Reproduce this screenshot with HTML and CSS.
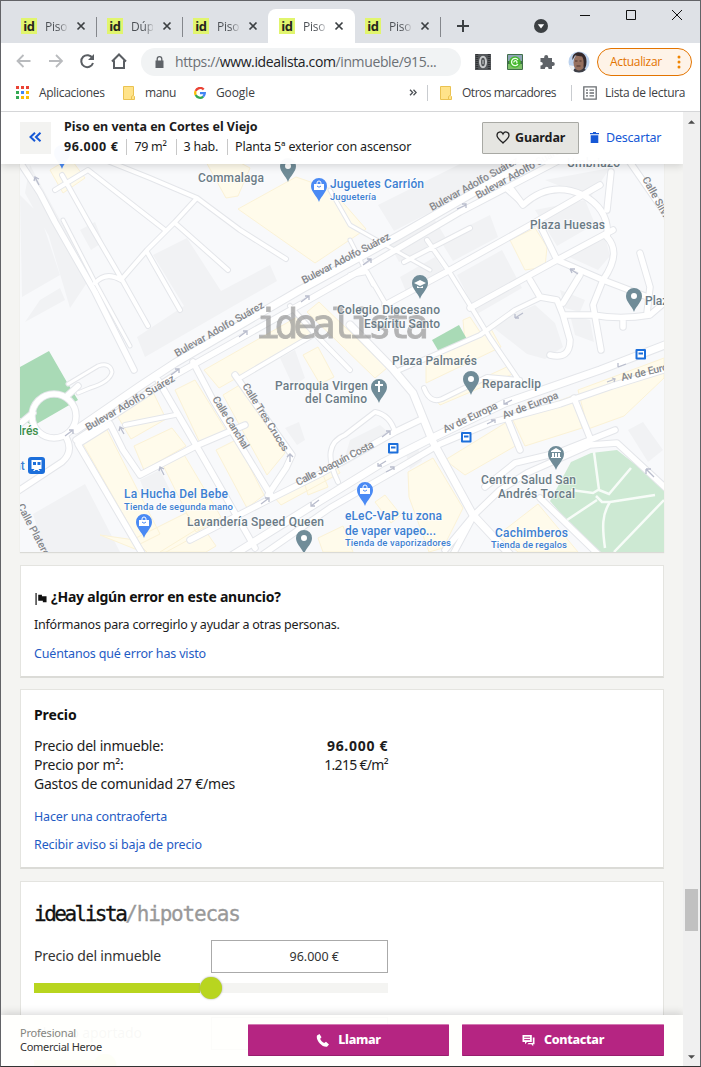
FILE: index.html
```html
<!DOCTYPE html>
<html lang="es">
<head>
<meta charset="utf-8">
<title>Piso en venta en Cortes el Viejo</title>
<link rel="stylesheet" href="styles.css">
</head>
<body>
<div class="window">
  <div class="tabs">
    <div class="tab"><span class="fav">id</span><span class="tab-name">Piso</span><svg class="x" viewBox="0 0 10 10"><path d="M1.5 1.5l7 7m0-7l-7 7"/></svg></div>
    <div class="tab"><span class="fav">id</span><span class="tab-name">Dúp</span><svg class="x" viewBox="0 0 10 10"><path d="M1.5 1.5l7 7m0-7l-7 7"/></svg></div>
    <div class="tab no-sep"><span class="fav">id</span><span class="tab-name">Piso</span><svg class="x" viewBox="0 0 10 10"><path d="M1.5 1.5l7 7m0-7l-7 7"/></svg></div>
    <div class="tab active"><span class="fav">id</span><span class="tab-name">Piso</span><svg class="x" viewBox="0 0 10 10"><path d="M1.5 1.5l7 7m0-7l-7 7"/></svg></div>
    <div class="tab"><span class="fav">id</span><span class="tab-name">Piso</span><svg class="x" viewBox="0 0 10 10"><path d="M1.5 1.5l7 7m0-7l-7 7"/></svg></div>
    <svg class="plus" viewBox="0 0 12 12"><path d="M6 0v12M0 6h12"/></svg>
    <svg class="tab-menu" viewBox="0 0 14 14"><circle cx="7" cy="7" r="7"/><path d="M3.8 5.3h6.4L7 9.6z"/></svg>
    <svg class="win-buttons" viewBox="0 0 104 12"><path d="M0 6.5h10M46.500 1.500h9v9h-9zM92 1l10 10m0-10L92 11"/></svg>
  </div>

  <div class="toolbar">
    <svg class="nav" viewBox="0 0 112 20">
      <g class="nav-off"><path d="M14.500 10H2M7.500 4L1.500 10l6 6M33 10h12.500M40 4l6 6-6 6"/></g>
      <g class="nav-on"><path d="M76.500 7.200A6 6 0 1 0 77 12"/><path class="fill" d="M78 3v6h-6z"/><path d="M96 10.500l7-7 7 7M98 9.500V17h10V9.500"/></g>
    </svg>
    <div class="url">
      <svg class="lock" viewBox="0 0 9 12"><path d="M.5 4.500h8V12h-8z"/><path class="shackle" d="M2.200 5V3a2.300 2.300 0 0 1 4.600 0v2"/></svg>
      <span class="url-text">https://<b>www.idealista.com</b>/inmueble/915...</span>
    </div>
    <svg class="ext" viewBox="0 0 16 16"><rect width="16" height="16" fill="#55585b"/><path d="M2 0v16M14 0v16" stroke="#303234" stroke-width="2.500" stroke-dasharray="1 1"/><ellipse cx="8" cy="8" rx="3" ry="5.200" fill="none" stroke="#c9cbcc" stroke-width="2"/><path d="M8 6v4" stroke="#c9cbcc"/></svg>
    <svg class="ext" viewBox="0 0 16 16"><rect width="16" height="16" rx="1" fill="#3f6f48"/><path d="M1 1h14v6H1z" fill="#8fa4b8"/><path d="M1 10h14v5H1z" fill="#7fc06a"/><circle cx="8" cy="8" r="5.800" fill="#45b72d"/><path d="M11 5.800A3.600 3.600 0 1 0 11 10.200M7 8.500a1.500 1.500 0 1 1 2.500.700" fill="none" stroke="#ecffe8" stroke-width="1.300"/></svg>
    <svg class="ext" viewBox="0 0 16 16"><path fill="#5f6368" d="M1.500 4h3.700V3a2 2 0 0 1 4 0v1H13v4h.8a2 2 0 0 1 0 4H13v3H9.500v-.5a1.800 1.800 0 0 0-3.600 0v.5H1.500v-3.500H2a1.800 1.800 0 0 0 0-3.600h-.5z"/></svg>
    <svg class="avatar" viewBox="0 0 22 22"><clipPath id="face"><circle cx="11" cy="11" r="10.500"/></clipPath><g clip-path="url(#face)"><path fill="#bcd2ee" d="M0 0h22v22H0z"/><path fill="#f2f4f4" d="M0 14l6 1v7H0z"/><path fill="#3f3f45" d="M5 22l1-4 5-2 6 2 3 4z"/><ellipse cx="11" cy="11.500" rx="5.500" ry="8" fill="#96705f"/><path fill="#33282a" d="M4.500 9C3-1 19-2 18.500 11c0 4-1.500 7-3.500 8 1-6 1-11-1-13.500L7 4.500z"/><path d="M7 10h2.500m2 0h2M8.500 15h4" stroke="#49302b"/></g></svg>
    <div class="update"><span>Actualizar</span><svg viewBox="0 0 4 14"><circle cx="2" cy="2" r="1.500"/><circle cx="2" cy="7" r="1.500"/><circle cx="2" cy="12" r="1.500"/></svg></div>
  </div>

  <div class="bookmarks">
    <svg class="apps" viewBox="0 0 13 13"><path fill="#ea4335" d="M0 0h3v3H0zM5 0h3v3H5zM10 0h3v3h-3z"/><path fill="#34a853" d="M0 5h3v3H0zM0 10h3v3H0z"/><path fill="#4285f4" d="M5 5h3v3H5z"/><path fill="#fbbc05" d="M10 5h3v3h-3zM5 10h3v3H5zM10 10h3v3h-3z"/></svg>
    <span class="bm-apps">Aplicaciones</span>
    <svg class="folder" viewBox="0 0 12 14"><path d="M.5.5h10v9l1 1v3H.5z"/><path d="M8.500 13.500v-3l1.500-1"/></svg>
    <span class="bm-manu">manu</span>
    <svg class="google" viewBox="0 0 12 12" fill="none" stroke-width="2.300"><path stroke="#ea4335" d="M9.700 2.500A4.800 4.800 0 0 0 1.700 3.900"/><path stroke="#fbbc05" d="M1.700 3.900a4.800 4.800 0 0 0 0 4.200"/><path stroke="#34a853" d="M1.700 8.100a4.800 4.800 0 0 0 7.500 1.500"/><path stroke="#4285f4" d="M9.200 9.600A4.800 4.800 0 0 0 10.800 6.100H6"/></svg>
    <span class="bm-google">Google</span>
    <svg class="more" viewBox="0 0 8 7"><path d="M1 .7L3.700 3.500 1 6.300M4.500.7l2.700 2.800-2.700 2.800"/></svg>
    <i class="rule"></i>
    <svg class="folder f2" viewBox="0 0 12 14"><path d="M.5.5h10v9l1 1v3H.5z"/><path d="M8.500 13.500v-3l1.500-1"/></svg>
    <span class="bm-other">Otros marcadores</span>
    <i class="rule r2"></i>
    <svg class="list" viewBox="0 0 14 14"><path d="M.8.800h12.400v12.400H.8zM3 4.200h2M6.500 4.200H11M3 7h2M6.500 7H11M3 9.800h2M6.500 9.800H11"/></svg>
    <span class="bm-list">Lista de lectura</span>
  </div>

  <div class="viewport">
    <main class="page">
      <svg class="map" viewBox="20 112 644 440">
        <defs>
          <g id="roads">
            <path class="r7" d="M12 150L40 193L55 222L95 292L134 370"/>
            <path class="r5" d="M63 220L95 282L130 346"/>
            <path class="r6" d="M62 175L90 225L121 278L148 326M95 283Q106 271 121 280L147 250L175 222L197 198M55 190L88 170L165 230M105 160L150 178L197 198L240 230L286 259M175 223L228 270M147 252L180 310"/>
            <path class="r8" d="M76 430L140 386L175 363L300 290L400 235L530 160"/>
            <path class="r7" d="M76 440L175 375L305 302L370 265L460 212L560 160"/>
            <path class="r7" d="M66 437Q74 452 62 462L15 493"/>
            <path class="r7" d="M32 416a22 22 0 1 0 44 0a22 22 0 1 0-44 0M33 413L15 428M67 396L78 386"/>
            <path class="r5" d="M68 384L98 366Q110 362 112 372Q110 382 90 388L78 393"/>
            <path class="r7" d="M146 560L78 444L110 424L123 450L140 475M193 362L213 400L272 497M158 380L200 452L255 548M235 375L292 455L286 468L268 495M140 475L198 445L245 425"/>
            <path class="r6" d="M125 425L175 415M290 306L315 334L240 378M315 334L350 370M338 482Q320 445 345 435L375 412Q390 415 395 432"/>
            <path class="r7" d="M190 540L268 500L320 474L395 432L420 420"/>
            <path class="r8" d="M225 560L315 504L382 463L430 439L505 403L600 370L670 343"/>
            <path class="r7" d="M255 560L330 508L389 474L440 444L490 423L560 404L612 386L670 368"/>
            <path class="r8" d="M350 325L392 368L413 393L432 440L473 515L515 560"/>
            <path class="r6" d="M424 388Q430 404 442 399L487 377L520 380M395 372L480 335L515 310L540 298M350 275L367 272L385 303L390 303M404 262L470 228M427 240L450 273L473 310L490 338L520 382"/>
            <path class="r7" d="M385 305L450 270L527 227L600 185M470 308L557 260L613 230M540 225L557 260L603 280L645 296"/>
            <path class="r7" d="M530 280L540 297L557 300L563 315L570 340Q570 360 550 355M580 275L563 303M563 315L593 315Q620 320 650 315L664 303M603 280L593 305L601 350M607 237Q622 253 603 280M640 253L650 287L647 313M623 318V327"/>
            <path class="r7" d="M512 190L523 205Q550 180 583 195Q610 210 607 237M607 210L611 172M625 155L670 220"/>
            <path class="r7" d="M485 487L515 463L557 453L615 430M474 515L500 490L527 473L590 445L617 443L670 492M474 515L450 560M474 515L445 550M540 498L602 558M508 420L520 450M574 398L590 438"/>
            <path class="r5" d="M350 240L373 285M330 190L350 225L430 270M493 178L523 205"/>
          </g>
          <g id="pin"><path d="M0 10C-2 4-8 0-8-6A8 8 0 0 1 8-6C8 0 2 4 0 10z"/></g>
        </defs>
        <path fill="#f8f9fb" d="M20 112h644v440H20z"/>
        <g class="built">
          <path d="M20 195l20 20 20 60-38 22M60 220l30 58-20 30-25-85zM153 255l34-17 34 53 49-26 7 16-132 76-8-20 47-31zM33 514l52-30 35 68H45zM80 230l15-8 8 20-12 8zM40 300l20-12 5 12-40 22zM30 165l60 110-15 8-50-90z"/>
          <path d="M378 205l120-60 8 28-112 58zM390 245l45-25 12 20-48 22zM400 277l35-20 10 15-38 22zM440 240l50-25 8 22-45 24zM457 275l45-25 20 38-45 26zM545 180l65-12-20 30zM535 210l50-10 10 24-38 22zM565 255l40-19 5 20-12 14zM560 290l25 10-5 12-15-4zM575 335l-5-20 20 5 4 22zM490 325l45-20 20 18 8 24-18 12-18-5z"/>
          <path d="M280 358l15-8 10 28-12 8zM350 440l30-15 14 12-52 30zM628 430l15-8 20 28-15 12zM405 450l12-5 5 16-12 8zM285 428l14-6 6 18-8 5zM140 480l20-10 10 20-22 10z"/>
        </g>
        <g class="yellow">
          <path d="M50 170l20-12 15 20-22 15zM205 160h30l15 8-12 28-12 2zM238 209l58-32 35 12 35 40-51 34zM510 240l25-12 12 19-2 20-20 3zM463 320l7-3 10 15-15 10z"/>
          <path d="M204 370l95-54 17 17-97 55zM307 312l12-10 29 28 39 38-12 10zM303 355l15-8 16 30-14 7zM115 412l38-20 13 27-35 20zM134 446l38-18 14 18-42 24zM82 442l24-14 54 106-20 10zM175 390l20-10 32 52-26 13zM223 395l20-12 42 70-18 22zM216 450l20-10 28 55-17 13zM163 465l20-12 38 64-25 15zM275 498l60-35 5 10-59 32zM305 485l18-10 5 12-20 8zM136 538l50-25 15 20-55 30zM160 552l42-26 14 20-10 6z"/>
          <path d="M426 383l75-36-10-18-65 28zM440 405l75-32-4-8-75 35zM445 460l62-38 10 23-52 30zM512 418l60-22 10 32-57 18zM578 390l86-32v20l-40 38-36 13zM408 472l25-14 30 50-20 40-14 4-20-55zM498 535l40-31 40 48h-60zM375 502l10-7 16 20-10 8zM318 538l25-12 10 26h-30zM100 535l35 5 15 15z"/>
        </g>
        <g class="green">
          <path d="M20 367l29-16 19 33 10 16-45 26-13-8z"/><path d="M432 340l27-15 9 16-29 11z"/><path d="M571 462l20-9 26-3 47 37v65h-70l-44-51z"/>
        </g>
        <use href="#roads" class="casing"/><use href="#roads" class="asphalt"/>
        <path class="paths" d="M594 452l5 38 10 4 22-26M571 490l22 3 5-3M655 495l-45 7-8 0-6-6M610 502c-8 12-8 25-5 46M597 500l-30 20M664 500l-50 52"/>
        <path class="arrows" d="M171 375l8-6m-4 0h4v4M239 337l8-6m-4 0h4v4M301 302l8-6m-4 0h4v4M363 265l8-6m-4 0h4v4M65 436l8-6m-4 0h4v4M261 504l8-6m-4 0h4v4M311 506l8-6m-8 2v4h4M382 437l8-6m-4 0h4v4M378 466l8-5m-8 2v3h4M386 472l8-4m-4-1h4v3M504 404l8-4m-8 0v4h4M487 424l8-4m-4 0h4v3M570 269l8 5m-8-5h5m-5 0l2 4M515 318l8-5m-8 5v-4m0 4h4M646 469l8 8m-8-8h5m-5 0v5M618 367l8-3m-8 3v-4M607 382l8-3m-3-1l3 1-1 3M290 462v-8m-3 3l3-3 3 3M164 475l-4-8m-1 4l1-4 4 2M124 434l-4-7m-1 4l1-4 4 2M457 209l9-4m-4-1h4v4M39 185l-4-8m-1 4l1-4 4 2"/>

        <g class="street">
          <text transform="translate(177 357) rotate(-29.500)" textLength="101">Bulevar Adolfo Suárez</text>
          <text transform="translate(304 284) rotate(-27.500)" textLength="98">Bulevar Adolfo Suárez</text>
          <text transform="translate(432 211) rotate(-29)" textLength="100">Bulevar Adolfo Suárez</text>
          <text transform="translate(478 199) rotate(-29)" textLength="100">Bulevar Adolfo Suárez</text>
          <text transform="translate(88 431) rotate(-30)" textLength="101">Bulevar Adolfo Suárez</text>
          <text transform="translate(212 399) rotate(58)" textLength="60">Calle Canchal</text>
          <text transform="translate(242 386) rotate(58)" textLength="78">Calle Tres Cruces</text>
          <text transform="translate(298 486) rotate(-27)" textLength="86">Calle Joaquín Costa</text>
          <text transform="translate(445 433) rotate(-25)" textLength="59">Av de Europa</text>
          <text transform="translate(504 419) rotate(-21)" textLength="59">Av de Europa</text>
          <text transform="translate(622 381) rotate(-13)" textLength="59">Av de Europa</text>
          <text transform="translate(17 506) rotate(62)" textLength="58">Calle Platero</text>
          <text transform="translate(642 179) rotate(61)" textLength="50">Calle Silvia</text>
        </g>
        <g class="watermark"><text x="256" y="338" textLength="173">idealista</text></g>
        <g class="place">
          <text x="198" y="182" textLength="66">Commalaga</text><text x="530" y="229" textLength="75">Plaza Huesas</text>
          <text x="567" y="167" textLength="53">Umbriazo</text>
          <text x="337" y="314" textLength="103">Colegio Diocesano</text><text x="364" y="328" textLength="76">Espíritu Santo</text>
          <text x="392" y="365" textLength="85">Plaza Palmarés</text><text x="482" y="388" textLength="59">Reparaclip</text><text x="645" y="305">Plaza</text>
          <text x="275" y="390" textLength="93">Parroquia Virgen</text><text x="305" y="403" textLength="62">del Camino</text>
          <text x="187" y="526" textLength="137">Lavandería Speed Queen</text>
          <text x="481" y="484" textLength="95">Centro Salud San</text><text x="498" y="498" textLength="77">Andrés Torcal</text>
        </g>
        <g class="shop">
          <text x="330" y="188" textLength="94">Juguetes Carrión</text><text class="sub" x="330" y="200" textLength="46">Juguetería</text>
          <text x="124" y="498" textLength="104">La Hucha Del Bebe</text><text class="sub" x="124" y="510" textLength="109">Tienda de segunda mano</text>
          <text x="345" y="520" textLength="97">eLeC-VaP tu zona</text><text x="345" y="535" textLength="91">de vaper vapeo...</text><text class="sub" x="345" y="546" textLength="106">Tienda de vaporizadores</text>
          <text x="495" y="537" textLength="73">Cachimberos</text><text class="sub" x="491" y="548" textLength="76">Tienda de regalos</text>
          <text x="14" y="470">nt</text><text class="park" x="15" y="435">drés</text>
        </g>
        <g class="pins">
          <use href="#pin" x="288" y="172"/><use href="#pin" x="420" y="289"/><use href="#pin" x="634" y="302"/><use href="#pin" x="471" y="385"/><use href="#pin" x="379" y="393"/><use href="#pin" x="304" y="544"/><use href="#pin" x="556" y="460"/>
          <g class="blue"><use href="#pin" x="62" y="159"/><use href="#pin" x="319" y="192"/><use href="#pin" x="144" y="528"/><use href="#pin" x="365" y="496"/></g>
          <path class="white" d="M285 166a3 3 0 1 0 6 0a3 3 0 1 0-6 0M631 296a3 3 0 1 0 6 0a3 3 0 1 0-6 0M468 379a3 3 0 1 0 6 0a3 3 0 1 0-6 0M301 538a3 3 0 1 0 6 0a3 3 0 1 0-6 0M414 283l6-3 6 3-6 3zM417 286l3 1.500 3-1.500v2h-6zM378 381h2v3h3v2h-3v6h-2v-6h-3v-2h3zM551 451l5-3 5 3v1h-10zM552 453h2v4h-2zM555 453h2v4h-2zM558 453h2v4h-2zM551 457h10v1h-10zM314 184h10v6h-10zM139 520h10v6h-10zM360 488h10v6h-10z"/>
          <path class="handle" d="M317 184v-1a2 2 0 0 1 4 0v1M142 520v-1a2 2 0 0 1 4 0v1M363 488v-1a2 2 0 0 1 4 0v1"/>
          <path class="smile" d="M317 186q2 2.500 4 0M142 522q2 2.500 4 0M363 490q2 2.500 4 0"/>
        </g>
        <g class="transit">
          <rect x="28" y="457" width="17" height="17" rx="3"/><rect x="388" y="443" width="10.500" height="10.500" rx="1"/><rect x="461" y="432" width="10.500" height="10.500" rx="1"/><rect x="635.500" y="349" width="10.500" height="10.500" rx="1"/>
          <path d="M31.500 460h10v9h-10zM33 471l1.500-2h4l1.500 2h-1.500l-1-1h-2l-1 1zM390 445h6.500v6.500H390zM463 434h6.500v6.500H463zM637.500 351h6.500v6.500h-6.500z"/>
          <path class="window-glass" d="M33 462h3v3h-3zM37.500 462h3v3h-3zM391 446.500h4.500v2H391zM464 435.500h4.500v2H464zM638.500 352.500h4.500v2h-4.500z"/>
        </g>
      </svg>

      <section class="card error">
        <h2><svg class="flag" viewBox="0 0 12 13"><path d="M0 0h1.300v13H0zM3 2h4v1.500h5V10H8V8.500H3z"/></svg><span>¿Hay algún error en este anuncio?</span></h2>
        <p class="small">Infórmanos para corregirlo y ayudar a otras personas.</p>
        <a class="l-error">Cuéntanos qué error has visto</a>
      </section>

      <section class="card price">
        <h2>Precio</h2>
        <div class="row"><span class="p1">Precio del inmueble:</span><b>96.000 €</b></div>
        <div class="row"><span class="p2">Precio por m²:</span><span class="sqm">1.215 €/m²</span></div>
        <div class="row"><span class="p3">Gastos de comunidad 27 €/mes</span></div>
        <a class="l-offer">Hacer una contraoferta</a>
        <a class="l-notice">Recibir aviso si baja de precio</a>
      </section>

      <section class="card mortgage">
        <div class="brand">idealista<span>/hipotecas</span></div>
        <div class="field"><label>Precio del inmueble</label><div class="input">96.000 €</div></div>
        <div class="slider"><div class="done"></div><div class="knob"></div></div>
        <div class="field second"><label>Ahorro aportado</label><div class="input"></div></div>
        <div class="slider low"><div class="done"></div><div class="knob"></div></div>
      </section>
    </main>

    <header class="summary">
      <div class="back"><svg viewBox="0 0 13 10"><path d="M6 .8L1.500 5 6 9.200M11.500.8L7 5l4.500 4.200"/></svg></div>
      <div class="facts">
        <div class="title">Piso en venta en Cortes el Viejo</div>
        <div class="details"><b>96.000 €</b><span class="d1">79 m²</span><span class="d2">3 hab.</span><span class="d3">Planta 5ª exterior con ascensor</span></div>
      </div>
      <div class="save"><svg viewBox="0 0 14 13"><path d="M7 12C5 10 1 7.500 1 4.300 1 .5 5.500-.2 7 3c1.500-3.200 6-2.500 6 1.300C13 7.500 9 10 7 12z"/></svg><span>Guardar</span></div>
      <div class="discard"><svg viewBox="0 0 9 11"><path d="M0 1h3V0h3v1h3v1.300H0zM.7 3.200h7.600V11H.7z"/></svg><span>Descartar</span></div>
    </header>

    <footer class="contact">
      <div class="agent"><span>Profesional</span><span class="name">Comercial Heroe</span></div>
      <div class="cta call"><svg viewBox="0 0 13 13"><path d="M3.500 0L1 1.500C-.5 6 6 13.500 11 12.700l2-2.200-3-2.800-1.800 1.200C6.500 8.500 4.500 6 4.200 4.700L5.500 3.200z"/></svg><span>Llamar</span></div>
      <div class="cta write"><svg viewBox="0 0 13 13"><path d="M.5 1h9.300v7H5L3 10.300V8H.5zM10.800 3.500h1.700v6.700h-1.300v2L9.300 10.200H5.500l1-1.200h4.300z"/><path class="lines" d="M2.200 3.200H8M2.200 5.600H8"/></svg><span>Contactar</span></div>
    </footer>

    <div class="scrollbar"><svg viewBox="0 0 8 4"><path d="M0 4l4-4 4 4z"/></svg><div class="thumb"></div><svg class="down" viewBox="0 0 8 4"><path d="M0 0h8L4 4z"/></svg></div>
  </div>
</div>
</body>
</html>
```
FILE: styles.css
```css
* { box-sizing: border-box; }
body { margin: 0; font-family: "Noto Sans", sans-serif; color: #1c1c1c; }
svg { display: block; flex: none; }
span, b, label, a { white-space: nowrap; }

.window { width: 701px; height: 1067px; border: 1px solid #626367; border-bottom-color: #333; display: flex; flex-direction: column; overflow: hidden; background: #fff; }

/* browser chrome */
.tabs { height: 42px; background: #dee1e6; display: flex; position: relative; padding-left: 10px; font: 12px "Open Sans", sans-serif; color: #4b4f54; }
.tab { width: 86px; height: 34px; margin-top: 8px; padding-left: 10px; display: flex; align-items: center; position: relative; }
.tab::after { content: ""; position: absolute; right: 0; top: 8px; width: 1px; height: 20px; background: #84878c; }
.tab.no-sep::after, .tab.active::after { display: none; }
.tab.active { background: #fff; border-radius: 8px 8px 0 0; width: 87px; margin-left: -1px; padding-left: 11px; }
.fav { width: 16px; height: 16px; background: #e1f56e; color: #26261e; font: 700 13px/16px "Open Sans", sans-serif; text-align: center; letter-spacing: -.3px; }
.tab-name { width: 22px; margin-left: 8px; overflow: hidden; letter-spacing: -.2px; background: linear-gradient(90deg, #4b4f54 60%, #c6c8cc); -webkit-background-clip: text; color: transparent; }
.x { width: 10px; height: 10px; margin-left: 9px; stroke: #3c4043; stroke-width: 1.700; }
.plus { width: 12px; height: 12px; margin: 19px 0 0 16px; stroke: #3c4043; stroke-width: 2; }
.tab-menu { width: 14px; height: 14px; margin: 18px 0 0 65px; fill: #3c4043; }
.tab-menu path { fill: #fff; }
.win-buttons { width: 104px; height: 12px; margin: 8px 0 0 32px; fill: none; stroke: #111; }
.toolbar { height: 37px; display: flex; align-items: center; padding-left: 15px; }
.nav { width: 112px; height: 20px; fill: none; position: relative; top: -1px; }
.nav-off { stroke: #b9bbbe; stroke-width: 1.800; }
.nav-on { stroke: #5a5e63; stroke-width: 2; }
.nav-on .fill { fill: #5a5e63; stroke: none; }
.url { width: 320px; height: 28px; margin-left: 13px; border-radius: 14px; background: #f1f3f4; display: flex; align-items: center; padding-left: 14px; font: 14px "Open Sans", sans-serif; color: #6c7075; }
.lock { width: 9px; height: 12px; fill: #5f6368; }
.lock .shackle { fill: none; stroke: #5f6368; stroke-width: 1.300; }
.url-text { margin-left: 11px; letter-spacing: -.38px; }
.url-text b { font-weight: 400; color: #202124; }
.ext { width: 16px; height: 16px; margin-left: 14px; }
.ext + .ext { margin-left: 16px; }
.avatar { width: 22px; height: 22px; margin-left: 13px; }
.update { width: 95px; height: 28px; margin-left: 7px; border: 1px solid #e37400; border-radius: 14px; background: #fef3e8; color: #e37400; font: 12px "Open Sans", sans-serif; display: flex; align-items: center; padding-left: 12px; }
.update span { letter-spacing: -.3px; width: 67px; }
.update svg { width: 4px; height: 14px; fill: #f08400; }
.bookmarks { height: 32px; border-bottom: 1px solid #d5d6d8; display: flex; align-items: center; padding: 0 0 6px 15px; font: 12px "Open Sans", sans-serif; color: #3c4043; }
.apps { width: 13px; height: 13px; margin-right: 10px; }
.bm-apps { width: 84px; letter-spacing: -.3px; }
.folder { width: 12px; height: 14px; fill: #ffe38a; stroke: #eac251; }
.bm-manu { width: 49px; margin-left: 10px; letter-spacing: -.4px; }
.google { width: 12px; height: 12px; }
.bm-google { width: 193px; margin-left: 10px; letter-spacing: -.1px; }
.more { width: 8px; height: 7px; fill: none; stroke: #4b4f54; stroke-width: 1.300; margin-right: 2px; }
.rule { width: 1px; height: 16px; background: #c9ccd0; margin-left: 8px; }
.f2 { margin-left: 12px; }
.bm-other { margin-left: 10px; width: 96px; letter-spacing: -.48px; }
.r2 { margin-left: 13px; }
.list { width: 14px; height: 14px; margin-left: 11px; fill: none; stroke: #696d71; stroke-width: 1.300; }
.bm-list { margin-left: 8px; letter-spacing: -.3px; }

/* page */
.viewport { flex: 1; position: relative; overflow: hidden; background: #f4f4f2; }
.page { padding: 0 36px 0 19px; display: flex; flex-direction: column; }
.map { width: 644px; height: 440px; font-family: Roboto, sans-serif; overflow: hidden; box-shadow: 0 1px 1px #dadad6; }
#roads path { fill: none; stroke-linecap: round; stroke-linejoin: round; }
.r5 { stroke-width: calc(3px + var(--edge)); }
.r6 { stroke-width: calc(4px + var(--edge)); }
.r7 { stroke-width: calc(5.5px + var(--edge)); }
.r8 { stroke-width: calc(7px + var(--edge)); }
.casing { --edge: 2px; stroke: #e4e6ea; }
.asphalt { --edge: 0px; stroke: #fff; }
.built { fill: #f1f2f4; }
.yellow { fill: #fffbeb; stroke: #fbf2d6; }
.green { fill: #a9dab6; }
.green path:last-child { fill: #cde9d3; }
.paths { fill: none; stroke: #f7fcf8; stroke-width: 2.500; }
.arrows { fill: none; stroke: #b9bdcd; stroke-width: 1.300; }
.street { font-size: 10.500px; font-weight: 500; fill: #85878b; }
.place { font-size: 12px; font-weight: 500; fill: #6b7b86; stroke: #fff; stroke-width: 2px; paint-order: stroke; stroke-opacity: .5; }
.shop { font-size: 12px; font-weight: 500; fill: #3d80d2; stroke: #fff; stroke-width: 2px; paint-order: stroke; stroke-opacity: .5; }
.shop .sub { font-size: 9.500px; }
.shop .park { fill: #3d8f4c; }
.watermark { font: 40px "DejaVu Sans Mono", monospace; fill: #8f8f8f; stroke: #8f8f8f; stroke-width: .8px; opacity: .65; }
.pins { fill: #708c98; }
.pins .blue { fill: #4a8af4; }
.pins .white { fill: #fff; }
.handle { fill: none; stroke: #fff; }
.smile { fill: none; stroke: #4a8af4; }
.transit { fill: #1c6fdb; }
.transit path { fill: #fff; }
.transit .window-glass { fill: #1c6fdb; }

.card { background: #fff; border: 1px solid #e4e4e0; border-bottom: 2px solid #dbdbd7; margin-top: 13px; padding: 0 13px; display: flex; flex-direction: column; align-items: flex-start; }
.card h2 { margin: 0; font-size: 14px; line-height: 20px; font-weight: 700; display: flex; align-items: center; color: #111; }
.card a { color: #1f5bc4; font-size: 12.500px; line-height: 18px; letter-spacing: -.17px; }
.error { height: 113px; padding-top: 21px; }
.error h2 span { letter-spacing: -.22px; }
.flag { width: 12px; height: 12px; margin: 3px 4px 0 1px; fill: #111; }
.small { margin: 9px 0 11px; font-size: 12.500px; line-height: 18px; letter-spacing: -.23px; }
.price { height: 180px; margin-top: 11px; padding-top: 15px; }
.price h2 { margin-bottom: 11px; letter-spacing: -.1px; }
.row { width: 354px; display: flex; justify-content: space-between; font-size: 14px; line-height: 19px; letter-spacing: -.22px; }
.row b { letter-spacing: .7px; margin-right: -.2px; }
.row .sqm { letter-spacing: -.68px; }
.l-offer { margin: 15px 0 10px; }
.l-notice { margin-right: -1px; }
.card .l-notice { letter-spacing: -.13px; }
.mortgage { height: 300px; margin-top: 12px; padding-top: 18px; }
.brand { font: 21px/28px "DejaVu Sans Mono", monospace; letter-spacing: -2.500px; color: #111; -webkit-text-stroke: .3px; }
.brand span { color: #999; letter-spacing: -1.200px; }
.field { width: 354px; height: 33px; margin-top: 12px; display: flex; justify-content: space-between; align-items: center; font-size: 14px; color: #333; }
.field label { letter-spacing: -.16px; margin-top: -3px; }
.input { width: 177px; height: 33px; border: 1px solid #aaa; padding-right: 48px; text-align: right; font-size: 12.500px; line-height: 31px; letter-spacing: 0; }
.slider { width: 354px; height: 10px; margin-top: 10px; background: #f4f4f2; display: flex; align-items: center; }
.done { width: 166px; height: 10px; background: #b8d51f; }
.knob { width: 22px; height: 22px; border-radius: 50%; background: #b8d51f; box-shadow: 0 0 2px #999; flex: none; }
.second { margin-top: 24px; }
.low .done { width: 60px; }

.summary { position: absolute; left: 0; top: 0; width: 682px; height: 52px; background: rgba(255,255,255,.97); box-shadow: 0 2px 8px rgba(0,0,0,.15); display: flex; padding: 10px 0 0 19px; }
.back { width: 31px; height: 32px; background: #f3f3f1; display: flex; align-items: center; justify-content: center; padding-bottom: 2px; }
.back svg { width: 13px; height: 10px; fill: none; stroke: #1658d6; stroke-width: 2; }
.facts { width: 418px; margin: -5px 0 0 13px; font-size: 12.500px; line-height: 20px; }
.title { font-weight: 700; letter-spacing: -.03px; }
.details { display: flex; align-items: center; }
.details b { letter-spacing: .6px; }
.details span { border-left: 1px solid #c8c8c8; padding-left: 7px; margin-left: 8px; line-height: 16px; letter-spacing: -.3px; }
.details .d2 { margin-left: 9px; }
.details .d3 { margin-left: 9px; letter-spacing: -.17px; }
.save { width: 97px; height: 32px; border: 1px solid #a8a9a4; border-radius: 1px; background: #e5e5e1; display: flex; align-items: center; padding: 0 0 2px 13px; font-size: 12.500px; font-weight: 700; letter-spacing: -.1px; }
.save svg { width: 14px; height: 13px; margin-right: 5px; fill: none; stroke: #222; stroke-width: 1.300; }
.discard { display: flex; align-items: center; height: 31px; margin-left: 11px; color: #1658d6; font-size: 12.500px; letter-spacing: -.2px; }
.discard svg { width: 9px; height: 11px; margin-right: 7px; fill: #1658d6; }

.contact { position: absolute; left: 0; bottom: 0; width: 682px; height: 51px; background: rgba(255,255,253,.97); box-shadow: 0 -2px 8px rgba(0,0,0,.15); display: flex; padding: 9px 0 0 19px; }
.agent { width: 228px; padding-top: 2px; display: flex; flex-direction: column; font-size: 11px; line-height: 14px; letter-spacing: -.2px; color: #85857f; }
.agent .name { color: #333; letter-spacing: -.27px; }
.cta { width: 201px; height: 32px; background: #b52582; border-top: 1px solid #d37ab3; border-bottom: 1px solid #981d6d; border-radius: 1px; display: flex; align-items: center; justify-content: center; color: #fff; font-size: 12.500px; font-weight: 800; letter-spacing: -.3px; padding-bottom: 2px; }
.cta svg { width: 13px; height: 13px; margin: 2px 9px 0 0; fill: #fff; }
.cta .lines { stroke: #b52582; }
.write { width: 202px; margin-left: 13px; }

.scrollbar { position: absolute; right: 0; top: 0; width: 17px; height: 100%; background: #f0f0f0; display: flex; flex-direction: column; align-items: center; padding-top: 8px; }
.scrollbar svg { width: 7px; height: 4px; fill: #4d4d4d; }
.thumb { width: 13px; height: 42px; margin-top: 765px; background: #c1c1c1; }
.scrollbar .down { margin-top: 124px; }
```
